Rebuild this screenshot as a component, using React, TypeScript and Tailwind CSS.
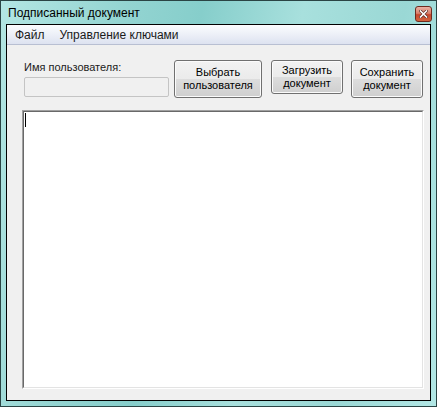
import React from "react";

const btn =
  "shrink-0 rounded-[3px] border border-[#707070] bg-[linear-gradient(to_bottom,#f2f2f2_0%,#ebebeb_50%,#dddddd_50%,#cfcfcf_100%)] shadow-[inset_0_0_0_1px_#fbfbfb] text-[11px] leading-[13px] text-black flex items-center justify-center text-center";

export default function App() {
  return (
    <div
      className="w-[437px] h-[407px] border border-[#2a4444] bg-[linear-gradient(100deg,#b3e6e3_0%,#93d4d1_25%,#86cecb_40%,#a8e0dd_60%,#9ad8d5_80%,#b2e7e5_100%)] flex flex-col"
      style={{ fontFamily: '"Liberation Sans", Arial, sans-serif' }}
    >
      {/* title bar */}
      <div className="h-[23px] flex items-center justify-between pl-[7px] pr-[4px]">
        <span className="text-[12px] text-black pt-[1px]">Подписанный документ</span>
        <div className="w-[17px] h-[16px] rounded-[3px] border border-[#6e2b1f] bg-[linear-gradient(to_bottom,#eab2a4_0%,#d9806c_45%,#c6462c_55%,#d2643f_100%)] flex items-center justify-center mt-[2px]">
          <svg width="9" height="8" viewBox="0 0 9 8">
            <path d="M1.5 1 L7.5 7 M7.5 1 L1.5 7" stroke="#5a2a22" strokeWidth="3" strokeLinecap="square" />
            <path d="M1.5 1 L7.5 7 M7.5 1 L1.5 7" stroke="#ffffff" strokeWidth="1.6" strokeLinecap="square" />
          </svg>
        </div>
      </div>

      {/* client area */}
      <div className="mx-[5px] mb-[5px] flex-1 border border-black bg-[#f0f0f0] flex flex-col">
        {/* menu */}
        <div className="h-[20px] border-b border-[#b8bfd2] bg-[linear-gradient(to_bottom,#fbfcfe_0%,#eef1f8_45%,#dde2f0_100%)] flex items-center text-[12px] text-[#1a1a1a]">
          <span className="ml-[8px]">Файл</span>
          <span className="ml-[15px]">Управление ключами</span>
        </div>

        <div className="flex-1 flex flex-col pl-[15px] pr-[6px] pt-[15px] pb-[11px]">
          <div className="flex items-start">
            <div className="shrink-0 ml-[2px] flex flex-col w-[145px]">
              <span className="text-[11px] leading-[13px] text-[#202020] mt-[1px]">Имя пользователя:</span>
              <div className="mt-[3px] h-[20px] rounded-[2px] border border-[#c4c4c4] bg-[#f0f0f0]" />
            </div>
            <button className={`${btn} ml-[5px] w-[88px] h-[38px]`}>
              Выбрать
              <br />
              пользователя
            </button>
            <button className={`${btn} ml-[9px] w-[72px] h-[34px]`}>
              Загрузить
              <br />
              документ
            </button>
            <button className={`${btn} ml-[8px] w-[72px] h-[38px]`}>
              Сохранить
              <br />
              документ
            </button>
          </div>

          <div className="mt-[12px] flex-1 border-t border-l border-[#a0a0a0] border-b border-r border-b-white border-r-white">
            <div className="h-full border-t border-l border-[#696969] border-b border-r border-b-[#e3e3e3] border-r-[#e3e3e3] bg-white">
              <div className="ml-[1px] mt-[1px] w-px h-[14px] bg-black" />
            </div>
          </div>
        </div>
      </div>
    </div>
  );
}
